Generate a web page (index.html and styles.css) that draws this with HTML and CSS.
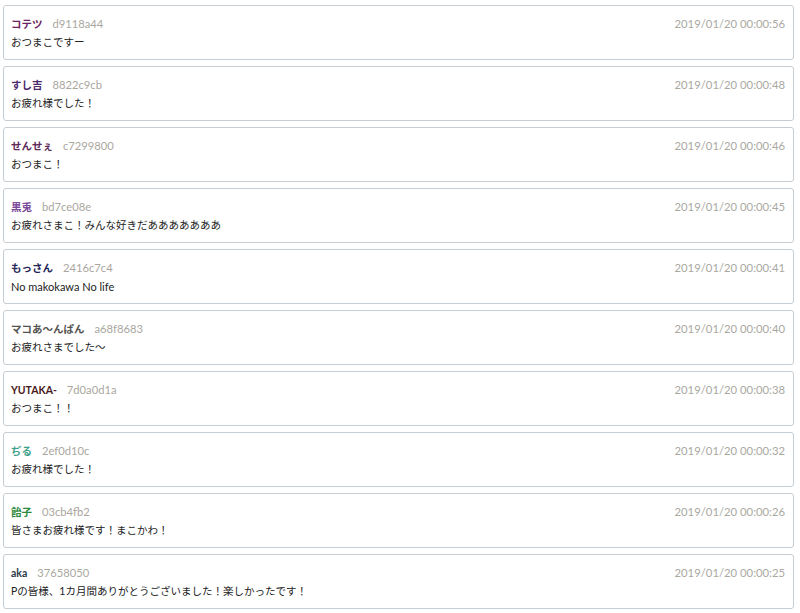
FILE: index.html
```html
<!DOCTYPE html>
<html lang="ja">
<head>
    <meta charset="UTF-8">
    <title>コメント一覧</title>
    <link rel="stylesheet" href="styles.css">
</head>
<body>

    <div class="comment-list">
        <div class="comment">
            <div class="comment-head">
                <span class="name c-kotetsu">コテツ</span>
                <span class="hash">d9118a44</span>
                <span class="time">2019/01/20 00:00:56</span>
            </div>
            <div class="comment-body">おつまこですー</div>
        </div>
        <div class="comment">
            <div class="comment-head">
                <span class="name c-sushi">すし吉</span>
                <span class="hash">8822c9cb</span>
                <span class="time">2019/01/20 00:00:48</span>
            </div>
            <div class="comment-body">お疲れ様でした！</div>
        </div>
        <div class="comment">
            <div class="comment-head">
                <span class="name c-sensee">せんせぇ</span>
                <span class="hash">c7299800</span>
                <span class="time">2019/01/20 00:00:46</span>
            </div>
            <div class="comment-body">おつまこ！</div>
        </div>
        <div class="comment">
            <div class="comment-head">
                <span class="name c-kuro">黒兎</span>
                <span class="hash">bd7ce08e</span>
                <span class="time">2019/01/20 00:00:45</span>
            </div>
            <div class="comment-body">お疲れさまこ！みんな好きだあああああああ</div>
        </div>
        <div class="comment">
            <div class="comment-head">
                <span class="name c-mossan">もっさん</span>
                <span class="hash">2416c7c4</span>
                <span class="time">2019/01/20 00:00:41</span>
            </div>
            <div class="comment-body latin">No makokawa No life</div>
        </div>
        <div class="comment">
            <div class="comment-head">
                <span class="name c-makoan">マコあ〜んぱん</span>
                <span class="hash">a68f8683</span>
                <span class="time">2019/01/20 00:00:40</span>
            </div>
            <div class="comment-body">お疲れさまでした〜</div>
        </div>
        <div class="comment">
            <div class="comment-head">
                <span class="name c-yutaka">YUTAKA-</span>
                <span class="hash">7d0a0d1a</span>
                <span class="time">2019/01/20 00:00:38</span>
            </div>
            <div class="comment-body">おつまこ！！</div>
        </div>
        <div class="comment">
            <div class="comment-head">
                <span class="name c-diru">ぢる</span>
                <span class="hash">2ef0d10c</span>
                <span class="time">2019/01/20 00:00:32</span>
            </div>
            <div class="comment-body">お疲れ様でした！</div>
        </div>
        <div class="comment">
            <div class="comment-head">
                <span class="name c-ameko">飴子</span>
                <span class="hash">03cb4fb2</span>
                <span class="time">2019/01/20 00:00:26</span>
            </div>
            <div class="comment-body">皆さまお疲れ様です！まこかわ！</div>
        </div>
        <div class="comment">
            <div class="comment-head">
                <span class="name c-aka">aka</span>
                <span class="hash">37658050</span>
                <span class="time">2019/01/20 00:00:25</span>
            </div>
            <div class="comment-body">Pの皆様、1カ月間ありがとうございました！楽しかったです！</div>
        </div>
    </div>

</body>
</html>
```

FILE: styles.css
```css
body {
    margin: 0;
    padding: 0;
    background-color: #fff;
    color: #222;
    font-family: Lato, "Noto Sans CJK JP", sans-serif;
    font-size: 10.5px;
}
/* コメント一覧 */
.comment-list {
    display: flex;
    flex-direction: column;
    gap: 6px;
    padding: 5px 6px 0 3px;
}
.comment {
    border: 1px solid #c6ced4;
    border-radius: 3px;
    padding: 9px 8px 8px 7px;
    box-sizing: border-box;
    height: 55px;
}
.comment-head {
    display: flex;
    align-items: baseline;
    line-height: 17px;
}
.name {
    font-weight: bold;
    margin-right: 10px;
}
.hash {
    color: #aaa7a0;
    font-size: 11.2px;
}
.time {
    margin-left: auto;
    color: #a9a8a1;
    font-size: 11.3px;
}
.comment-body {
    line-height: 19px;
    margin-top: 0;
}
.comment-body.latin {
    font-size: 11px;
}
/* 名前の色 */
.c-kotetsu { color: #6b2460; }
.c-sushi { color: #4b2a6e; }
.c-sensee { color: #5d2a58; }
.c-kuro { color: #7a4a9a; }
.c-mossan { color: #1f2556; }
.c-makoan { color: #555350; }
.c-yutaka { color: #4a1a22; }
.c-diru { color: #3aa08a; }
.c-ameko { color: #2e8a3e; }
.c-aka { color: #2a3a48; }
```
